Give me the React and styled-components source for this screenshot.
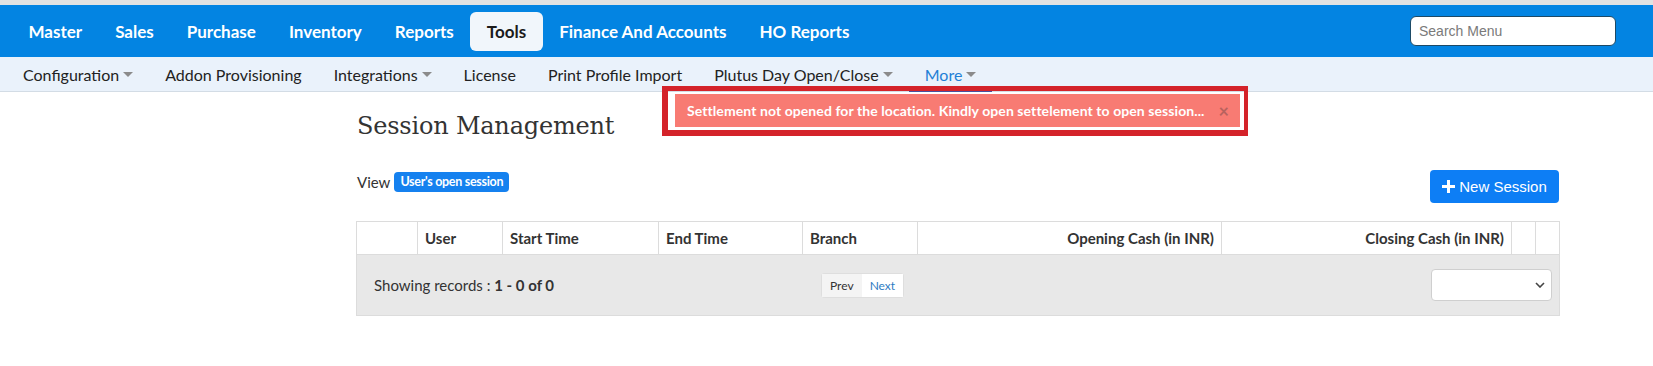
import React from "react";
import styled, { createGlobalStyle } from "styled-components";

const topMenu = ["Master", "Sales", "Purchase", "Inventory", "Reports", "Tools", "Finance And Accounts", "HO Reports"];

const subMenu = [
    { label: "Configuration", caret: true },
    { label: "Addon Provisioning" },
    { label: "Integrations", caret: true },
    { label: "License" },
    { label: "Print Profile Import" },
    { label: "Plutus Day Open/Close", caret: true },
    { label: "More", caret: true, active: true },
];

const columns = [
    { label: "", width: 61 },
    { label: "User", width: 85 },
    { label: "Start Time", width: 156 },
    { label: "End Time", width: 144 },
    { label: "Branch", width: 115 },
    { label: "Opening Cash (in INR)", width: 304, right: true },
    { label: "Closing Cash (in INR)", width: 290, right: true },
    { label: "", width: 24 },
    { label: "", width: 24 },
];

const App = () => {
    return (
        <Page>
            <GlobalStyle />
            <TopStrip />
            <NavBar>
                {topMenu.map((item) => (
                    <NavItem key={item} $active={item === "Tools"}>
                        {item}
                    </NavItem>
                ))}
                <Search placeholder="Search Menu" />
            </NavBar>
            <SubNav>
                {subMenu.map((item) => (
                    <SubItem key={item.label} $active={item.active}>
                        {item.label}
                        {item.caret && <Caret />}
                    </SubItem>
                ))}
            </SubNav>

            <Content>
                <Title>Session Management</Title>
                <Toolbar>
                    <ViewLabel>
                        View <Badge>User's open session</Badge>
                    </ViewLabel>
                    <NewButton>
                        <svg width="13" height="13" viewBox="0 0 13 13">
                            <path d="M5 0h3v5h5v3H8v5H5V8H0V5h5z" fill="#fff" />
                        </svg>
                        New Session
                    </NewButton>
                </Toolbar>

                <Table>
                    <thead>
                        <tr>
                            {columns.map((col, i) => (
                                <Th key={i} $right={col.right} style={{ width: col.width }}>
                                    {col.label}
                                </Th>
                            ))}
                        </tr>
                    </thead>
                    <tbody>
                        <tr>
                            <FooterCell colSpan={columns.length}>
                                <FooterGrid>
                                    <Records>
                                        Showing records : <b>1 - 0 of 0</b>
                                    </Records>
                                    <Pager>
                                        <PageBtn>Prev</PageBtn>
                                        <PageBtn $link>Next</PageBtn>
                                    </Pager>
                                    <SelectBox>
                                        <svg width="10" height="6" viewBox="0 0 10 6">
                                            <path d="M1 1l4 4 4-4" stroke="#444" strokeWidth="1.6" fill="none" />
                                        </svg>
                                    </SelectBox>
                                </FooterGrid>
                            </FooterCell>
                        </tr>
                    </tbody>
                </Table>
            </Content>

            <Toast>
                Settlement not opened for the location. Kindly open settelement to open session...
                <Close>×</Close>
            </Toast>
            <Highlight />
        </Page>
    );
};

export default App;

const GlobalStyle = createGlobalStyle`
    body {
        margin: 0;
        background: #fff;
        color: #333;
        font-family: Lato, "Open Sans", sans-serif;
    }
`;

const Page = styled.div`
    position: relative;
    width: 1653px;
    height: 366px;
    overflow: hidden;
`;

const TopStrip = styled.div`
    height: 5px;
    background: #e2e2e2;
`;

const NavBar = styled.div`
    height: 52px;
    background: #0384e2;
    display: flex;
    align-items: center;
    padding: 0 37px 0 12px;
`;

const NavItem = styled.div`
    padding: 0 16.5px;
    height: 39px;
    line-height: 39px;
    border-radius: 6px;
    font-size: 17px;
    font-weight: 700;
    color: ${(p) => (p.$active ? "#1b1b1b" : "#fff")};
    background: ${(p) => (p.$active ? "#f1f6fb" : "transparent")};
`;

const Search = styled.input`
    margin-left: auto;
    width: 206px;
    height: 30px;
    box-sizing: border-box;
    border: 1px solid #1d4a66;
    border-radius: 6px;
    padding: 0 8px;
    font-family: "Liberation Sans", Arial, sans-serif;
    font-size: 14px;
    &::placeholder {
        color: #7a7a7a;
    }
`;

const SubNav = styled.div`
    height: 34px;
    background: #eaf2fb;
    border-bottom: 1px solid #d3dce5;
    display: flex;
    align-items: stretch;
    padding-left: 7px;
`;

const SubItem = styled.div`
    display: flex;
    align-items: center;
    padding: 0 16px;
    font-size: 16px;
    color: ${(p) => (p.$active ? "#1e7fd6" : "#222")};
    box-shadow: ${(p) => (p.$active ? "inset 0 -2px 0 #4a4f9e" : "none")};
    margin-bottom: -1px;
`;

const Caret = styled.span`
    margin-left: 4px;
    width: 0;
    height: 0;
    border-left: 5px solid transparent;
    border-right: 5px solid transparent;
    border-top: 5px solid #8b8b8b;
`;

const Content = styled.div`
    padding-left: 356px;
    width: 1203px;
`;

const Title = styled.h2`
    margin: 19px 0 0 1px;
    font-family: "DejaVu Serif", serif;
    font-weight: 400;
    font-size: 24px;
    line-height: 30px;
    letter-spacing: -0.2px;
    color: #333;
`;

const Toolbar = styled.div`
    margin-top: 29px;
    display: flex;
    justify-content: space-between;
    align-items: flex-start;
`;

const ViewLabel = styled.div`
    margin-top: 2px;
    display: flex;
    align-items: center;
    gap: 4px;
    font-size: 15px;
    color: #333;
    padding-left: 1px;
`;

const Badge = styled.span`
    display: inline-block;
    height: 20px;
    line-height: 20px;
    padding: 0 6px;
    border-radius: 4px;
    background: #1581ef;
    color: #fff;
    font-size: 12.5px;
    font-weight: 700;
    letter-spacing: -0.3px;
`;

const NewButton = styled.button`
    display: flex;
    align-items: center;
    gap: 4px;
    height: 33px;
    width: 129px;
    justify-content: center;
    border: 0;
    border-radius: 4px;
    background: #0d7ef5;
    color: #fff;
    font-family: "Liberation Sans", Arial, sans-serif;
    font-size: 15px;
`;

const Table = styled.table`
    margin-top: 18px;
    width: 1203px;
    border-collapse: collapse;
    table-layout: fixed;
`;

const Th = styled.th`
    height: 33px;
    box-sizing: border-box;
    padding: 0 7px;
    border: 1px solid #dcdcdc;
    text-align: ${(p) => (p.$right ? "right" : "left")};
    font-size: 15px;
    font-weight: 700;
    color: #333;
    white-space: nowrap;
`;

const FooterCell = styled.td`
    height: 60px;
    padding: 0;
    background: #e8e8e8;
    border: 1px solid #dcdcdc;
`;

const FooterGrid = styled.div`
    display: grid;
    grid-template-columns: 465px auto 1fr;
    align-items: center;
    padding-right: 7px;
`;

const Records = styled.div`
    padding-left: 17px;
    font-size: 15px;
    color: #333;
    b {
        font-weight: 700;
    }
`;

const Pager = styled.div`
    display: flex;
    border-radius: 3px;
    box-shadow: 0 0 0 1px #dedede;
`;

const PageBtn = styled.span`
    display: block;
    height: 23px;
    line-height: 23px;
    padding: 0 8px;
    font-size: 12px;
    color: ${(p) => (p.$link ? "#2f7cc3" : "#333")};
    background: ${(p) => (p.$link ? "#fff" : "#f4f4f4")};
`;

const SelectBox = styled.div`
    justify-self: end;
    width: 121px;
    height: 32px;
    box-sizing: border-box;
    border: 1px solid #cfcfcf;
    border-radius: 4px;
    background: #fff;
    display: flex;
    align-items: center;
    justify-content: flex-end;
    padding-right: 6px;
`;

const Toast = styled.div`
    position: absolute;
    left: 675px;
    top: 94px;
    width: 565px;
    height: 33px;
    box-sizing: border-box;
    padding: 0 11px 0 12px;
    display: flex;
    align-items: center;
    justify-content: space-between;
    background: #f87b73;
    color: #fff;
    font-size: 14px;
    font-weight: 700;
    letter-spacing: 0.08px;
`;

const Close = styled.span`
    font-size: 18px;
    color: #b8625e;
`;

const Highlight = styled.div`
    position: absolute;
    left: 662px;
    top: 86px;
    width: 586px;
    height: 50px;
    box-sizing: border-box;
    border: 5px solid #d4232a;
    border-width: 5px 4px 6px 6px;
    pointer-events: none;
`;
